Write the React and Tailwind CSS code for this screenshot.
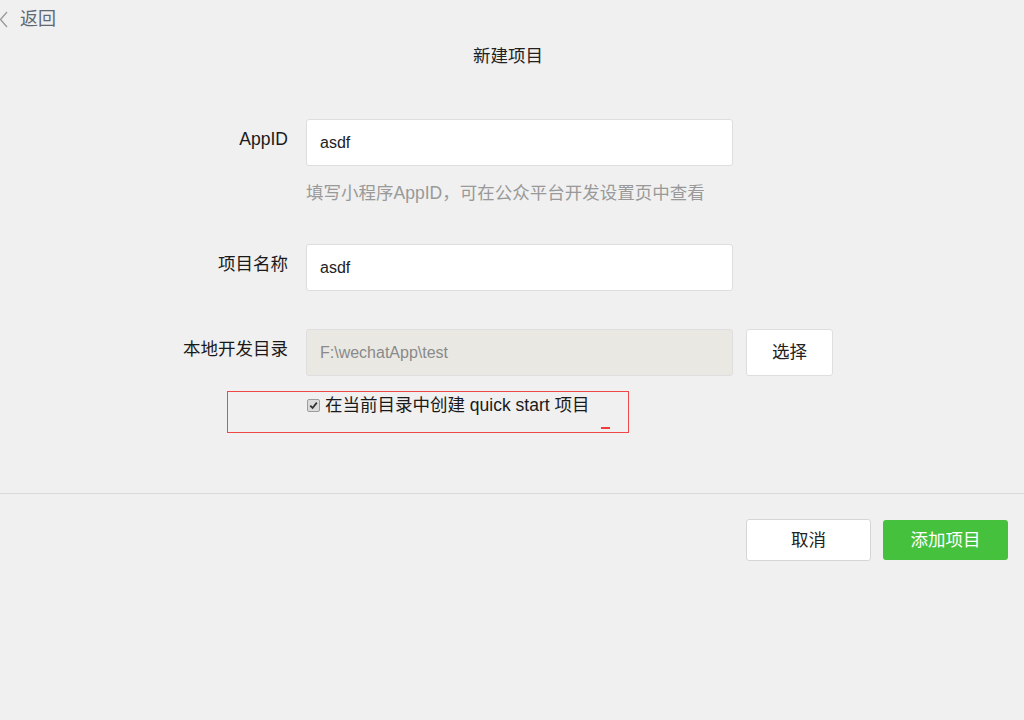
import React from 'react';

const font = { fontFamily: '"Liberation Sans", "Noto Sans CJK SC", sans-serif' };

const FormRow = ({ label, children, className }) => (
  <div className={`flex items-start ${className || ''}`}>
    <div className="w-[288px] shrink-0 pt-[9px] text-right text-[17.5px] leading-[22px] text-[#1a1a1a]">
      {label}
    </div>
    <div className="ml-[18px] flex-1">{children}</div>
  </div>
);

const TextInput = ({ value, disabled }) => (
  <div
    className={`flex h-[47px] w-[427px] items-center rounded-[3px] border border-[#dedede] px-[13px] text-[16px] ${
      disabled ? 'bg-[#e9e8e2] text-[#8a8a8a]' : 'bg-white text-[#222]'
    }`}
  >
    {value}
  </div>
);

export default function App() {
  return (
    <div className="flex h-[720px] w-[1024px] flex-col bg-[#f0f0f0]" style={font}>
      {/* top bar */}
      <div className="flex h-[38px] items-center">
        <svg width="9" height="17" viewBox="0 0 9 17" className="ml-[-1px]">
          <path d="M8 1 L1.5 8.5 L8 16" fill="none" stroke="#9a9a9a" strokeWidth="1.3" />
        </svg>
        <span className="ml-[12px] text-[18px] text-[#5f6873]">返回</span>
      </div>
      <div className="mt-[7px] pr-[8px] text-center text-[17.5px] leading-[22px] text-[#222]">新建项目</div>

      {/* form */}
      <div className="mt-[52px] flex flex-col">
        <FormRow label="AppID">
          <TextInput value="asdf" />
          <div className="mt-[16px] text-[17.5px] leading-[22px] text-[#999]">
            填写小程序AppID，可在公众平台开发设置页中查看
          </div>
        </FormRow>

        <FormRow label="项目名称" className="mt-[40px]">
          <TextInput value="asdf" />
        </FormRow>

        <FormRow label="本地开发目录" className="mt-[38px]">
          <div className="flex items-start">
            <TextInput value="F:\wechatApp\test" disabled />
            <button className="ml-[13px] h-[47px] w-[87px] rounded-[3px] border border-[#dedede] bg-white text-[17.5px] text-[#222]">
              选择
            </button>
          </div>
        </FormRow>

        <div className="ml-[227px] mt-[15px] flex h-[42px] w-[402px] flex-col border border-[#f04848] pl-[79px] pt-[2px]">
          <div className="flex items-center">
            <span className="flex h-[13px] w-[13px] items-center justify-center rounded-[2px] border border-[#9d9d9d] bg-[#dcdcdc]">
              <svg width="9" height="9" viewBox="0 0 9 9">
                <path d="M1.2 4.6 L3.6 7 L7.8 1.6" fill="none" stroke="#333" strokeWidth="1.8" />
              </svg>
            </span>
            <span className="ml-[5px] text-[17.5px] leading-[22px] text-[#1a1a1a]">
              在当前目录中创建 quick start 项目
            </span>
          </div>
          <div className="ml-[294px] mt-[11px] h-[2px] w-[9px] bg-[#f03c3c]" />
        </div>
      </div>

      <div className="mt-[60px] h-px w-full bg-[#d9d9d9]" />

      <div className="mt-[25px] flex justify-end pr-[16px]">
        <button className="h-[42px] w-[125px] rounded-[3px] border border-[#d6d6d6] bg-white text-[17.5px] text-[#222]">
          取消
        </button>
        <button className="ml-[12px] mt-px h-[40px] w-[125px] rounded-[3px] bg-[#46c13d] text-[17.5px] text-white">
          添加项目
        </button>
      </div>
    </div>
  );
}
